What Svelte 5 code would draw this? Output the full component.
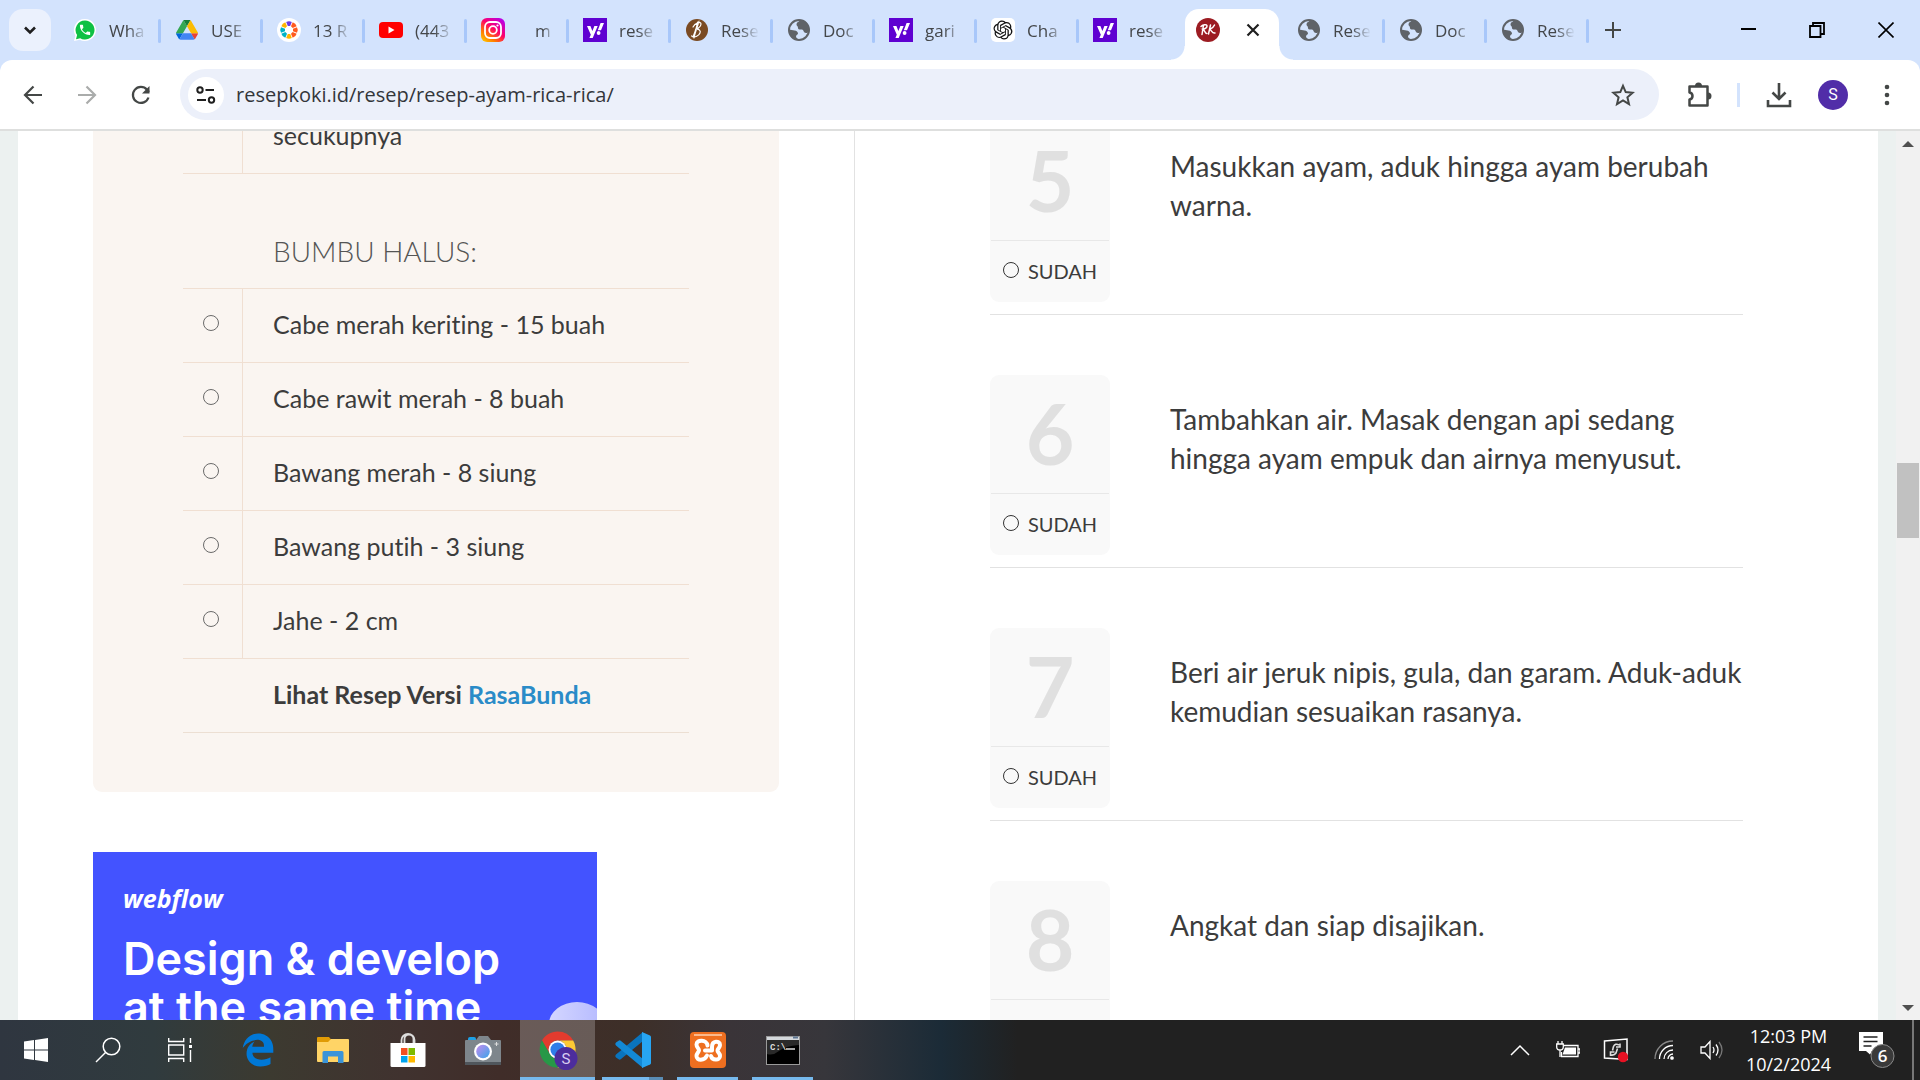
<script>
  const tabs = [
    { icon: 'whatsapp', label: 'Wha' },
    { icon: 'drive', label: 'USE' },
    { icon: 'burst', label: '13 R' },
    { icon: 'youtube', label: '(443' },
    { icon: 'instagram', label: 'm', late: true },
    { icon: 'yahoo', label: 'rese' },
    { icon: 'b', label: 'Rese' },
    { icon: 'globe', label: 'Doc' },
    { icon: 'yahoo', label: 'gari' },
    { icon: 'openai', label: 'Cha' },
    { icon: 'yahoo', label: 'rese' },
    { icon: 'rk', label: '', active: true },
    { icon: 'globe', label: 'Rese' },
    { icon: 'globe', label: 'Doc' },
    { icon: 'globe', label: 'Rese' },
  ];

  const ingredients = [
    'Cabe merah keriting - 15 buah',
    'Cabe rawit merah - 8 buah',
    'Bawang merah - 8 siung',
    'Bawang putih - 3 siung',
    'Jahe - 2 cm',
  ];

  const steps = [
    { n: 5, lines: ['Masukkan ayam, aduk hingga ayam berubah', 'warna.'] },
    { n: 6, lines: ['Tambahkan air. Masak dengan api sedang', 'hingga ayam empuk dan airnya menyusut.'] },
    { n: 7, lines: ['Beri air jeruk nipis, gula, dan garam. Aduk-aduk', 'kemudian sesuaikan rasanya.'] },
    { n: 8, lines: ['Angkat dan siap disajikan.'] },
  ];

  const burst = [
    ['#ff5a1f', 0], ['#ff5a1f', 45], ['#ffb400', 90], ['#00b3c6', 135],
    ['#00b3c6', 180], ['#ffb400', 225], ['#6a3be4', 270], ['#ff5a1f', 315],
  ];
</script>

{#snippet favicon(name)}
  <svg class="fav" viewBox="0 0 24 24" aria-hidden="true">
    {#if name === 'whatsapp'}
      <path d="M12 1a11 11 0 1 1-5.2 20.7L1 23l1.400-5.500A11 11 0 0 1 12 1z" fill="#fff" />
      <path d="M12 2.500a9.500 9.500 0 1 1-4.800 17.700L3 21.200l1.100-4.100A9.500 9.500 0 0 1 12 2.500z" fill="#0fc144" />
      <path transform="translate(5.200 5) scale(.57)" d="M6.620 10.790c1.440 2.830 3.760 5.140 6.590 6.590l2.200-2.200c.27-.27.67-.36 1.020-.24 1.120.37 2.330.57 3.570.57.55 0 1 .45 1 1V20c0 .55-.45 1-1 1-9.390 0-17-7.610-17-17 0-.55.45-1 1-1h3.500c.55 0 1 .45 1 1 0 1.250.2 2.450.57 3.570.11.35.03.74-.25 1.020z" fill="#fff" />
    {:else if name === 'drive'}
      <g transform="translate(1 2) scale(.252)">
        <path d="m6.600 66.850 3.850 6.650c.8 1.400 1.950 2.500 3.300 3.300l13.750-23.800h-27.500c0 1.550.4 3.100 1.200 4.500z" fill="#0066da" />
        <path d="m43.650 25-13.750-23.800c-1.350.8-2.500 1.900-3.300 3.300l-25.400 44a9.060 9.060 0 0 0-1.200 4.500h27.500z" fill="#34a853" />
        <path d="m73.550 76.800c1.350-.8 2.500-1.900 3.300-3.300l1.600-2.750 7.650-13.250c.8-1.400 1.200-2.950 1.200-4.500h-27.500l5.850 11.500z" fill="#ea4335" />
        <path d="m43.650 25 13.750-23.800c-1.350-.8-2.900-1.200-4.500-1.200h-18.500c-1.600 0-3.150.45-4.500 1.200z" fill="#188038" />
        <path d="m59.800 53h-32.300l-13.750 23.800c1.350.8 2.900 1.200 4.500 1.200h50.800c1.600 0 3.150-.45 4.500-1.200z" fill="#4285f4" />
        <path d="m73.400 26.500-12.700-22c-.8-1.400-1.950-2.500-3.300-3.300l-13.750 23.800 16.150 28h27.450c0-1.550-.4-3.100-1.200-4.500z" fill="#fbbc04" />
      </g>
    {:else if name === 'burst'}
      <circle cx="12" cy="12" r="12" fill="#fff" />
      {#each burst as [fill, angle]}
        <path d="M16 10.800l4-1.600q1.600 2.800 0 5.600l-4-1.600z" {fill} transform="rotate({angle} 12 12)" />
      {/each}
    {:else if name === 'youtube'}
      <rect x="0" y="4" width="24" height="16" rx="4" fill="#f00" />
      <path d="M9.500 8.500v7l6-3.500z" fill="#fff" />
    {:else if name === 'instagram'}
      <defs>
        <linearGradient id="ig" x1="0" y1="1" x2=".8" y2="0">
          <stop offset="0" stop-color="#ffd600" /><stop offset=".3" stop-color="#ff7a00" />
          <stop offset=".6" stop-color="#ff0169" /><stop offset="1" stop-color="#b900e6" />
        </linearGradient>
      </defs>
      <rect width="24" height="24" rx="6" fill="url(#ig)" />
      <rect x="4" y="4" width="16" height="16" rx="5" fill="none" stroke="#fff" stroke-width="1.800" />
      <circle cx="12" cy="12" r="3.800" fill="none" stroke="#fff" stroke-width="1.800" />
      <circle cx="16.500" cy="7.500" r="1.100" fill="#fff" />
    {:else if name === 'yahoo'}
      <rect width="24" height="24" fill="#5f01d1" />
      <path d="M4 8h3.400l2 5 2-5h3.300l-5 12H6.400l1.400-3.200zM17.600 5H21l-3 7.200h-3.200z" fill="#fff" />
      <circle cx="15.600" cy="15" r="1.900" fill="#fff" />
    {:else if name === 'b'}
      <circle cx="12" cy="12" r="11" fill="#7a4a22" />
      <path d="M8 19C10 14 12 9 12.500 4M8 9c2-4 8-6 8-3s-4 5-6 5.500c4-1 6 1 5 3.500s-5 5-8.500 3M14 3c-1 5-4 11-5 17" fill="none" stroke="#fff" stroke-width="1.200" stroke-linecap="round" />
    {:else if name === 'globe'}
      <circle cx="12" cy="12" r="10" fill="#d3e3fd" stroke="#5f6368" stroke-width="2" />
      <path d="M13 2c-1 2-3.500 2-3.500 4.500 0 1.500 1.500 1.500 1.500 3.500s2.500 1.500 4 1.500 1.500 3.500 4 3.500 1.500-1 3-1C23 7 19 2 13 2zM2 11.500c2 0 3.500 1 5.500 1s3.500 1.500 3.500 3-2 1-2 3 2 1.500 2 3.500C6 22 2 18 2 11.500z" fill="#5f6368" />
    {:else if name === 'openai'}
      <rect width="24" height="24" rx="5" fill="#fff" />
      <path transform="translate(2.500 2.500) scale(.79)" fill="#111" d="M22.2819 9.8211a5.9847 5.9847 0 0 0-.5157-4.9108 6.0462 6.0462 0 0 0-6.5098-2.9A6.0651 6.0651 0 0 0 4.9807 4.1818a5.9847 5.9847 0 0 0-3.9977 2.9 6.0462 6.0462 0 0 0 .7427 7.0966 5.98 5.98 0 0 0 .511 4.9107 6.051 6.051 0 0 0 6.5146 2.9001A5.9847 5.9847 0 0 0 13.2599 24a6.0557 6.0557 0 0 0 5.7718-4.2058 5.9894 5.9894 0 0 0 3.9977-2.9001 6.0557 6.0557 0 0 0-.7475-7.0729zm-9.022 12.6081a4.4755 4.4755 0 0 1-2.8764-1.0408l.1419-.0804 4.7783-2.7582a.7948.7948 0 0 0 .3927-.6813v-6.7369l2.02 1.1686a.071.071 0 0 1 .038.052v5.5826a4.504 4.504 0 0 1-4.4945 4.4944zm-9.6607-4.1254a4.4708 4.4708 0 0 1-.5346-3.0137l.142.0852 4.783 2.7582a.7712.7712 0 0 0 .7806 0l5.8428-3.3685v2.3324a.0804.0804 0 0 1-.0332.0615L9.74 19.9502a4.4992 4.4992 0 0 1-6.1408-1.6464zM2.3408 7.8956a4.485 4.485 0 0 1 2.3655-1.9728V11.6a.7664.7664 0 0 0 .3879.6765l5.8144 3.3543-2.0201 1.1685a.0757.0757 0 0 1-.071 0l-4.8303-2.7865A4.504 4.504 0 0 1 2.3408 7.872zm16.5963 3.8558L13.1038 8.364 15.1192 7.2a.0757.0757 0 0 1 .071 0l4.8303 2.7913a4.4944 4.4944 0 0 1-.6765 8.1042v-5.6772a.79.79 0 0 0-.407-.667zm2.0107-3.0231l-.142-.0852-4.7735-2.7818a.7759.7759 0 0 0-.7854 0L9.409 9.2297V6.8974a.0662.0662 0 0 1 .0284-.0615l4.8303-2.7866a4.4992 4.4992 0 0 1 6.6802 4.66zM8.3065 12.863l-2.02-1.1638a.0804.0804 0 0 1-.038-.0567V6.0742a4.4992 4.4992 0 0 1 7.3757-3.4537l-.142.0805L8.704 5.459a.7948.7948 0 0 0-.3927.6813zm1.0976-2.3654l2.602-1.4998 2.6069 1.4998v2.9994l-2.5974 1.4997-2.6067-1.4997Z" />
    {:else if name === 'rk'}
      <circle cx="12" cy="12" r="12" fill="#9c1c22" />
      <path d="M7.500 7L6 16.500M5 8.500c2-2 6-2.500 6-.5s-3 3-4.200 3.200c2 1 2.200 4 4 4.300M14.500 7L12.500 16M18.500 7c-1 2.500-3 3.800-5 4.500 2 0 2.500 4.500 5.500 3.500" fill="none" stroke="#fff" stroke-width="1.500" stroke-linecap="round" />
    {/if}
  </svg>
{/snippet}

<div class="screen">
  <header class="strip">
    <button class="search-tabs" aria-label="Search tabs">
      <svg width="16" height="16" viewBox="0 0 16 16"><path d="M3 5.500l5 5 5-5" fill="none" stroke="#1f1f1f" stroke-width="2.600" /></svg>
    </button>
    <nav class="tabs" aria-label="Tabs">
      {#each tabs as tab}
        <div class="tab" class:active={tab.active} class:late={tab.late}>
          {@render favicon(tab.icon)}
          {#if tab.active}
            <button class="plain" aria-label="Close tab">
              <svg width="14" height="14" viewBox="0 0 14 14"><path d="M1.500 1.500l11 11M12.500 1.500l-11 11" stroke="#1f1f1f" stroke-width="2.200" /></svg>
            </button>
          {:else}
            <span class="tab-label">{tab.label}</span>
          {/if}
        </div>
      {/each}
    </nav>
    <button class="plain new-tab" aria-label="New tab">
      <svg width="16" height="16" viewBox="0 0 16 16"><path d="M8 0v16M0 8h16" stroke="#444746" stroke-width="2" /></svg>
    </button>
    <div class="window-controls">
      <button class="plain" aria-label="Minimize"><svg width="16" height="16" viewBox="0 0 16 16"><path d="M1 7h15" stroke="#000" stroke-width="2" /></svg></button>
      <button class="plain" aria-label="Restore"><svg width="16" height="16" viewBox="0 0 16 16"><path d="M1 4h10.500v11H1zM4 4V1h11v11h-3.500" fill="none" stroke="#000" stroke-width="1.800" /></svg></button>
      <button class="plain" aria-label="Close"><svg width="16" height="16" viewBox="0 0 16 16"><path d="M.5.5l15 15M15.500.5l-15 15" stroke="#000" stroke-width="1.600" /></svg></button>
    </div>
  </header>

  <div class="toolbar-back">
    <div class="toolbar">
      <div class="nav-buttons">
        <button class="plain" aria-label="Back"><svg width="20" height="20" viewBox="0 0 20 20"><path d="M19 10H2.500M10.500 1.500L2 10l8.500 8.500" fill="none" stroke="#444746" stroke-width="2.200" /></svg></button>
        <button class="plain" aria-label="Forward"><svg width="20" height="20" viewBox="0 0 20 20"><path d="M1 10h16.500M9.500 1.500L18 10l-8.500 8.500" fill="none" stroke="#aaacab" stroke-width="2.200" /></svg></button>
        <button class="plain" aria-label="Reload"><svg width="20" height="20" viewBox="0 0 20 20"><path d="M17.500 12.500A8 8 0 1 1 16 4.700L18 7" fill="none" stroke="#444746" stroke-width="2.200" /><path d="M18.500 1v7.500H11z" fill="#444746" /></svg></button>
      </div>
      <div class="omnibox">
        <button class="site-info" aria-label="View site information">
          <svg width="20" height="18" viewBox="0 0 20 18" fill="none" stroke="#1f1f1f" stroke-width="2"><circle cx="4" cy="4" r="2.700" /><path d="M9.500 4H18M1 14h9" /><circle cx="15.500" cy="14" r="2.700" /></svg>
        </button>
        <div class="url-box">
          <input class="url" aria-label="Address" value="resepkoki.id/resep/resep-ayam-rica-rica/" spellcheck="false" />
        </div>
        <button class="plain star" aria-label="Bookmark this tab">
          <svg width="24" height="24" viewBox="0 0 24 24"><path d="M12 2.800l2.700 6.300 6.900.6-5.200 4.600 1.600 6.800-6-3.600-6 3.600 1.600-6.800L2.400 9.700l6.900-.6z" fill="none" stroke="#444746" stroke-width="2" /></svg>
        </button>
      </div>
      <button class="plain ext" aria-label="Extensions">
        <svg width="28" height="28" viewBox="0 0 28 28"><path d="M4.500 5.500H22.500V24.500H4.500V18.500Q7.500 18 7.500 15T4.500 11.500z" fill="none" stroke="#444746" stroke-width="2.500" stroke-linejoin="round" /><path d="M10 5a3.500 3.500 0 0 1 7 0zM23 11.500a3.500 3.500 0 0 1 0 7z" fill="#444746" /></svg>
      </button>
      <span class="divider"></span>
      <button class="plain dl" aria-label="Downloads">
        <svg width="26" height="26" viewBox="0 0 26 26" fill="none" stroke="#444746" stroke-width="2.600"><path d="M13 1v15M6.500 10.500L13 17l6.500-6.500M2 18v6h22v-6" /></svg>
      </button>
      <button class="avatar" aria-label="Profile">S</button>
      <button class="plain dots" aria-label="Menu"><svg width="6" height="22" viewBox="0 0 6 22" fill="#444746"><circle cx="3" cy="3" r="2.300" /><circle cx="3" cy="11" r="2.300" /><circle cx="3" cy="19" r="2.300" /></svg></button>
    </div>
  </div>

  <main class="viewport">
    <div class="page">
      <section class="left">
        <div class="card">
          <div class="row cut"><span class="pick"></span><span class="item">secukupnya</span></div>
          <h2>BUMBU HALUS:</h2>
          {#each ingredients as name}
            <label class="row">
              <span class="pick"><input type="radio" /></span>
              <span class="item">{name}</span>
            </label>
          {/each}
          <p class="more">Lihat Resep Versi <a href="#rasabunda">RasaBunda</a></p>
        </div>
        <a class="ad" href="#webflow">
          <span class="brand">webflow</span>
          <span class="pitch">Design &amp; develop<br />at the same time</span>
          <span class="blob"></span>
        </a>
      </section>
      <section class="right">
        <ol class="steps">
          {#each steps as step}
            <li>
              <div class="step-card">
                <div class="num">{step.n}</div>
                <label class="done"><input type="radio" />SUDAH</label>
              </div>
              <p>{#each step.lines as line, i}{#if i}<br />{/if}{line}{/each}</p>
            </li>
          {/each}
        </ol>
      </section>
    </div>
    <div class="scrollbar">
      <svg width="12" height="6" viewBox="0 0 12 6"><path d="M0 6l6-6 6 6z" fill="#505050" /></svg>
      <span class="track"><span class="thumb"></span></span>
      <svg width="12" height="6" viewBox="0 0 12 6"><path d="M0 0l6 6 6-6z" fill="#505050" /></svg>
    </div>
  </main>

  <footer class="taskbar">
    <button class="sys" aria-label="Start"><svg width="24" height="24" viewBox="0 0 24 24" fill="#fff"><path d="M0 3.400l10-1.400v9.500H0zM11 1.900L24 0v11.500H11zM0 12.500h10V22L0 20.600zM11 12.500h13V24l-13-1.900z" /></svg></button>
    <button class="sys" aria-label="Search"><svg width="26" height="26" viewBox="0 0 26 26" fill="none" stroke="#fff" stroke-width="1.500"><circle cx="16.500" cy="9.500" r="8.300" /><path d="M10.500 15.500L1 25" /></svg></button>
    <button class="sys" aria-label="Task View"><svg width="24" height="24" viewBox="0 0 24 24" fill="none" stroke="#fff" stroke-width="1.400"><path d="M.7 0v3.500h15V0M.7 24v-3.500h15V24M.7 7h15v10H.7zM22.500 0v5M22.500 12v12" /><path d="M21 7h3v3h-3z" fill="#fff" stroke="none" /></svg></button>
    <div class="apps">
      <button class="app" aria-label="Edge"><svg width="34" height="34" viewBox="0 0 512 512"><path fill="#0078d7" d="M25.714 228.163c.111-.162.23-.323.342-.485-.021.162-.045.323-.065.485h-.277zm460.572 15.508c0-44.032-7.754-84.465-28.801-122.405C416.498 47.879 343.912 8.001 258.893 8.001 118.962 7.724 40.617 113.214 26.056 227.679c42.429-61.312 117.073-121.376 220.375-124.966 0 0 109.666 0 99.419 104.957H169.997c6.369-37.386 18.554-58.986 34.339-78.926-75.048 34.893-121.850 96.096-120.742 188.315.83 71.448 50.124 144.836 120.743 171.976 83.357 31.847 192.776 7.200 240.132-21.324V363.307c-80.864 56.494-270.871 60.925-272.255-67.572h314.073v-52.064z" /></svg></button>
      <button class="app" aria-label="File Explorer"><svg width="34" height="36" viewBox="0 0 34 36"><path d="M1 6q0-1 1-1h11l2.500 3-2.500 3H1z" fill="#e09b05" /><path d="M1 10h11l3-3h17q1 0 1 1v21q0 1-1 1H2q-1 0-1-1z" fill="#ffd466" /><path d="M6.500 31V20.500q0-1.500 1.500-1.500h18q1.500 0 1.500 1.500V31H22v-6.500H12V31z" fill="#3a94d8" /></svg></button>
      <button class="app" aria-label="Microsoft Store"><svg width="36" height="36" viewBox="0 0 36 36"><path d="M11.500 11V8a6.500 6 0 0 1 13 0v3M14.500 11V7a4.500 4.500 0 0 1 9 0v4" fill="none" stroke="#ddd" stroke-width="1.800" /><path d="M.5 11h35v22.500q0 1.500-1.500 1.500H2q-1.500 0-1.500-1.500z" fill="#fff" /><path d="M11 16h6.500v7H11z" fill="#f25022" /><path d="M18.500 16H25v7h-6.500z" fill="#7fba00" /><path d="M11 24h6.500v6.500H11z" fill="#00a4ef" /><path d="M18.500 24H25v6.500h-6.500z" fill="#ffb900" /></svg></button>
      <button class="app" aria-label="Camera"><svg width="36" height="36" viewBox="0 0 36 36"><defs><linearGradient id="lens" x1="0" y1="0" x2="1" y2="1"><stop offset="0" stop-color="#c58bf0" /><stop offset="1" stop-color="#39a5e8" /></linearGradient></defs><rect x="3" y="5" width="8" height="5" rx="2" fill="#1ea0e6" /><path d="M1 8h10l3-4h9l3 4h9q1 0 1 1v22H0V9q0-1 1-1z" fill="#7e868c" /><path d="M0 30h36v3H0z" fill="#50565c" /><circle cx="18" cy="19.500" r="9" fill="#fff" /><circle cx="18" cy="19.500" r="6.800" fill="url(#lens)" /><path d="M31.500 10v4M29.500 12h4" stroke="#ddd" /></svg></button>
      <button class="app current" aria-label="Chrome"><svg width="40" height="40" viewBox="0 0 40 40"><g transform="translate(-2 -2) scale(.9)"><path d="M24 4C16.600 4 10.100 8 6.700 14l8.660 15A10 10 0 0 1 24 14h17.300A20 20 0 0 0 24 4z" fill="#e33b2e" /><path d="M6.700 14A20 20 0 0 0 24 44l8.660-15a10 10 0 0 1-17.320 0z" fill="#279847" /><path d="M41.300 14H24a10 10 0 0 1 8.660 15L24 44A20 20 0 0 0 41.300 14z" fill="#fcc934" /><circle cx="24" cy="24" r="10" fill="#fff" /><circle cx="24" cy="24" r="8" fill="#2f7de9" /></g><circle cx="28" cy="28.500" r="11.500" fill="#4c2d9c" /><text x="28" y="34" text-anchor="middle" font-size="15" fill="#d8cdf2" font-family="Roboto, sans-serif">S</text></svg></button>
      <button class="app open split" aria-label="Visual Studio Code"><svg width="36" height="36" viewBox="0 0 36 36"><path d="M1 25.500l3 2q1 .5 2-.5L28 9V0L1 22.500q-1.300 1.500 0 3z" fill="#0a74bd" /><path d="M1 10.500l3-2q1-.5 2 .5L28 27v9L1 13.500q-1.300-1.500 0-3z" fill="#1389d6" /><path d="M27 0l8 3.500q1 .5 1 1.500v26q0 1-1 1.500L27 36z" fill="#27a5f2" /></svg></button>
      <button class="app open" aria-label="XAMPP"><svg width="36" height="36" viewBox="0 0 36 36"><rect width="36" height="36" rx="4" fill="#ee6f20" /><path d="M4 2h28v2H4z" fill="#f9b98d" /><path d="M17.500 13.500C17 7.500 6.500 7 6.500 12.500c0 3 2.500 4 2.500 5.800s-2.500 3-2.500 5.700c0 5 8 5 10.500-.5M15 18.500h7V15c0-7 8-6.500 8-2 0 3-2.500 3.500-2.500 5.500s2.500 2.500 2.500 5.500c0 5-8 4.500-9 0" fill="none" stroke="#fff" stroke-width="4" stroke-linecap="round" stroke-linejoin="round" /></svg></button>
      <button class="app open" aria-label="Command Prompt"><svg width="34" height="29" viewBox="0 0 34 29"><rect x=".5" y=".5" width="33" height="28" fill="#000" stroke="#9a9a9a" /><path d="M1 1h32v3H1z" fill="#d4d8dc" /><path d="M27 1.500h5" stroke="#5e7693" stroke-width="2" /><path d="M1 4h32v5q-14 1-20 6T1 18z" fill="#2a2a2a" /><text x="4" y="14" font-size="9" font-weight="700" fill="#ddd" font-family="Liberation Mono, monospace">C:\</text><path d="M20 13h9" stroke="#ddd" stroke-width="1.500" /></svg></button>
    </div>
    <div class="tray">
      <button aria-label="Show hidden icons"><svg width="20" height="12" viewBox="0 0 20 12"><path d="M1 11l9-9 9 9" fill="none" stroke="#fff" stroke-width="1.500" /></svg></button>
      <button aria-label="Battery"><svg width="24" height="20" viewBox="0 0 24 20"><path d="M8 5.500h14v11H5.500V12M22.500 9H24v4h-1.500" fill="none" stroke="#fff" stroke-width="1.300" /><path d="M9 7.500h11v7H6.500z" fill="#fff" /><path d="M2 1v3M6 1v3M.7 4h6.600v3q0 3-3.300 3t-3.300-3zM4 10v7" fill="#222" stroke="#fff" stroke-width="1.300" /></svg></button>
      <button aria-label="Capture"><svg width="26" height="26" viewBox="0 0 26 26"><path d="M1.500 4L24 2v20.500L1.500 21z" fill="none" stroke="#fff" stroke-width="1.500" /><path d="M16 8q-4-2-5.500 1.500l-1 4M17 6.500v3.500h-4M8 18q3.500.5 5-2l1.500-4.500M7.500 19v-4h4" fill="none" stroke="#ddd" stroke-width="1.600" /><circle cx="20" cy="20" r="5.200" fill="#e81123" /></svg></button>
      <button aria-label="Wi-Fi"><svg width="20" height="20" viewBox="0 0 20 20" fill="none" stroke="#fff" stroke-width="1.300"><path d="M1 19A18 18 0 0 1 19 1" stroke="#888" /><path d="M5.500 19A13.500 13.500 0 0 1 19 5.500M10 19a9 9 0 0 1 9-9M14 19a5 5 0 0 1 5-5" /><circle cx="18" cy="18" r="1.200" fill="#fff" /></svg></button>
      <button aria-label="Volume"><svg width="24" height="20" viewBox="0 0 24 20" fill="none" stroke="#fff" stroke-width="1.300"><path d="M1 7h4l5-5.500v17L5 13H1zM13 7q2 3 0 6M16 4.500q4 5.500 0 11" /><path d="M19 2q6 8 0 16" stroke="#777" /></svg></button>
    </div>
    <div class="clock"><span>12:03 PM</span><span>10/2/2024</span></div>
    <button class="notify" aria-label="Notifications">
      <svg width="38" height="38" viewBox="0 0 38 38"><path d="M1 1h24v19H14l-2 3.500L8 20H1z" fill="#fff" /><path d="M5.500 6h14M5.500 10.500h14M5.500 15h8" stroke="#222" stroke-width="1.500" /><circle cx="24.500" cy="25" r="11.500" fill="#3a3a3a" stroke="#8a8a8a" /><text x="24.500" y="31" text-anchor="middle" font-size="17" font-weight="600" fill="#fff" font-family="Open Sans, sans-serif">6</text></svg>
    </button>
    <span class="peek"></span>
  </footer>
</div>

<style>
  :global(body) { margin: 0; }
  .screen {
    height: 100vh;
    display: flex;
    flex-direction: column;
    overflow: hidden;
    background: #fff;
    font-family: 'Open Sans', 'Noto Sans', sans-serif;
  }
  svg { display: block; flex: none; }
  button {
    border: 0;
    padding: 0;
    margin: 0;
    background: none;
    display: flex;
    align-items: center;
    justify-content: center;
    font-family: inherit;
  }

  .strip {
    flex: 0 0 60px;
    display: flex;
    background: #d3e3fd;
  }
  .search-tabs {
    width: 42px;
    height: 42px;
    margin: 9px 8px 0 9px;
    border-radius: 14px;
    background: #ebf1fd;
  }
  .tabs { display: flex; }
  .tab {
    width: 102px;
    height: 51px;
    margin-top: 9px;
    padding: 0 14px 9px;
    box-sizing: border-box;
    display: flex;
    align-items: center;
    gap: 12px;
    position: relative;
  }
  .tab::after {
    content: '';
    position: absolute;
    right: 0;
    top: 10px;
    width: 3px;
    height: 24px;
    border-radius: 2px;
    background: #a8c7fa;
  }
  .tab:has(+ .active)::after { display: none; }
  .tab.late { gap: 30px; }
  .fav { width: 24px; height: 24px; }
  .tab-label {
    flex: 0 0 38px;
    white-space: nowrap;
    font-size: 17px;
    line-height: 24px;
    padding-top: 2px;
    color: #44474a;
    -webkit-mask-image: linear-gradient(90deg, #000 50%, transparent);
    mask-image: linear-gradient(90deg, #000 50%, transparent);
  }
  .tab.late .tab-label { flex-basis: 18px; }
  .tab.active {
    width: 94px;
    margin: 9px 4px 0;
    padding-left: 11px;
    gap: 26px;
    border-radius: 14px 14px 0 0;
    background: #fff;
  }
  .tab.active::before,
  .tab.active::after {
    content: '';
    position: absolute;
    top: auto;
    bottom: 0;
    width: 14px;
    height: 14px;
    border-radius: 0;
  }
  .tab.active::before { left: -14px; background: radial-gradient(circle at 0 0, #d3e3fd 13px, #fff 14px); }
  .tab.active::after { right: -14px; background: radial-gradient(circle at 100% 0, #d3e3fd 13px, #fff 14px); }
  .new-tab { width: 48px; }
  .window-controls { margin-left: auto; display: flex; }
  .window-controls button { width: 69px; }

  .toolbar-back { flex: none; background: #d3e3fd; }
  .toolbar {
    height: 69px;
    border-bottom: 2px solid #dedfde;
    border-radius: 12px 12px 0 0;
    background: #fff;
    display: flex;
    align-items: center;
  }
  .nav-buttons { display: flex; padding: 0 12px 0 6px; }
  .nav-buttons button { width: 54px; height: 54px; }
  .omnibox {
    flex: 1;
    height: 51px;
    border-radius: 26px;
    background: #ecf0fa;
    display: flex;
    align-items: center;
    padding: 0 24px 0 8px;
  }
  .site-info { width: 36px; height: 36px; border-radius: 50%; background: #fff; }
  .url-box { flex: 1; display: flex; padding-left: 12px; }
  .url {
    flex: 1;
    border: 0;
    padding: 0;
    outline: 0;
    background: none;
    font-family: inherit;
    font-size: 20px;
    line-height: 30px;
    color: #33363a;
  }
  .ext { width: 54px; margin-left: 13px; }
  .divider { width: 3px; height: 24px; margin: 0 26px 0 11px; background: #d3e3fd; }
  .avatar {
    width: 30px;
    height: 30px;
    margin: 0 36px 0 26px;
    border-radius: 50%;
    background: #512da8;
    color: #fff;
    font-family: Roboto, sans-serif;
    font-size: 16px;
  }
  .dots { margin-right: 30px; }

  .viewport { flex: 1; min-height: 0; display: flex; background: #ecf1f0; }
  .page {
    flex: 1;
    margin: 0 18px;
    background: #fff;
    display: flex;
    overflow: hidden;
    font-family: Lato, 'Open Sans', sans-serif;
    font-variant-ligatures: none;
    color: #3c3c3c;
  }
  .left {
    flex: 0 0 45%;
    box-sizing: border-box;
    padding: 0 75px;
    border-right: 1px solid #e2e2e2;
  }
  .card {
    background: #faf5f1;
    border-radius: 0 0 9px 9px;
    padding: 0 90px 59px;
  }
  .row {
    height: 74px;
    box-sizing: border-box;
    border-bottom: 1px solid #f0dfd2;
    display: flex;
    font-size: 25px;
    line-height: 36px;
  }
  .row.cut { height: 43px; }
  .pick {
    flex: 0 0 60px;
    box-sizing: border-box;
    border-right: 1px solid #f0dfd2;
    display: flex;
    justify-content: center;
    align-items: center;
    padding: 0 3px 5px 0;
  }
  .item { align-self: flex-end; padding: 0 0 20px 30px; white-space: nowrap; }
  input[type='radio'] {
    appearance: none;
    box-sizing: border-box;
    width: 16px;
    height: 16px;
    margin: 0;
    border: 1px solid #6a6a6a;
    border-radius: 50%;
    background: none;
  }
  h2 {
    margin: 0;
    height: 115px;
    box-sizing: border-box;
    padding: 59px 0 0 90px;
    border-bottom: 1px solid #f0dfd2;
    font-size: 28px;
    line-height: 36px;
    font-weight: 300;
    color: #555;
  }
  .more {
    margin: 0;
    height: 74px;
    box-sizing: border-box;
    padding: 17px 0 20px 90px;
    border-bottom: 1px solid #ecdfd3;
    font-size: 25px;
    line-height: 36px;
    font-weight: 700;
    white-space: nowrap;
  }
  a { color: #2a8bc8; text-decoration: none; }
  .ad {
    position: relative;
    overflow: hidden;
    display: block;
    width: 504px;
    height: 420px;
    margin-top: 60px;
    box-sizing: border-box;
    padding: 29px 30px;
    background: #4353ff;
    color: #fff;
  }
  .brand {
    display: block;
    font-family: 'Open Sans', sans-serif;
    font-style: italic;
    font-weight: 700;
    font-size: 25px;
    line-height: 34px;
  }
  .pitch {
    display: block;
    margin-top: 19px;
    font-family: Inter, sans-serif;
    font-weight: 600;
    font-size: 45px;
    line-height: 49px;
    white-space: nowrap;
  }
  .blob {
    position: absolute;
    right: -8px;
    top: 150px;
    width: 56px;
    height: 44px;
    border-radius: 50%;
    background: linear-gradient(90deg, #d4d6ff, #b4b9ff);
  }

  .right { flex: 1; padding: 0 135px; }
  .steps { list-style: none; margin: -69px 0 0; padding: 0; }
  .steps li {
    height: 253px;
    box-sizing: border-box;
    padding: 60px 0 12px;
    border-bottom: 1px solid #e2e2e2;
    display: flex;
    gap: 60px;
  }
  .step-card {
    flex: 0 0 120px;
    border-radius: 9px;
    background: #f9f9f9;
  }
  .num {
    height: 119px;
    box-sizing: border-box;
    border-bottom: 1px solid #e8e8e8;
    margin: 0 1px;
    text-align: center;
    font-size: 84px;
    line-height: 116px;
    font-weight: 700;
    color: #e0e0e0;
  }
  .done {
    height: 60px;
    display: flex;
    align-items: center;
    justify-content: center;
    gap: 9px;
    font-size: 20px;
  }
  .done input[type='radio'] { margin-bottom: 3px; border-color: #333; }
  .steps p {
    margin: 25px 0 0;
    font-size: 28px;
    line-height: 39px;
    white-space: nowrap;
  }

  .scrollbar {
    flex: 0 0 24px;
    background: #f1f1f1;
    display: flex;
    flex-direction: column;
    align-items: center;
    padding: 10px 0 9px;
    box-sizing: border-box;
  }
  .track { flex: 1; padding-top: 316px; }
  .thumb { display: block; width: 22px; height: 75px; background: #c1c1c1; }

  .taskbar {
    flex: 0 0 60px;
    display: flex;
    background: linear-gradient(90deg, #2f3640 0, #303b3e 8%, #3c3a30 14%, #40322f 21%, #402d29 26%, #3d2f28 33%, #3a3438 38%, #37363b 43%, #1b2b37 49%, #212121 53%, #212121 100%);
  }
  .sys { width: 72px; }
  .apps { display: flex; margin-left: 4px; }
  .app { width: 75px; position: relative; }
  .current { background: rgba(255, 255, 255, 0.22); }
  .open::after,
  .current::after {
    content: '';
    position: absolute;
    bottom: 0;
    left: 7px;
    right: 7px;
    height: 3px;
    background: #76b9ed;
  }
  .current::after { left: 0; right: 0; }
  .split::after { background: linear-gradient(90deg, #76b9ed 47px, #5a8cb4 47px); }
  .tray { margin-left: auto; display: flex; }
  .tray button { width: 48px; }
  .clock {
    width: 105px;
    display: flex;
    flex-direction: column;
    align-items: center;
    justify-content: center;
    font-size: 18px;
    line-height: 28px;
    color: #fff;
  }
  .notify { width: 71px; }
  .peek { width: 2px; margin-right: 6px; background: #777; }
</style>
